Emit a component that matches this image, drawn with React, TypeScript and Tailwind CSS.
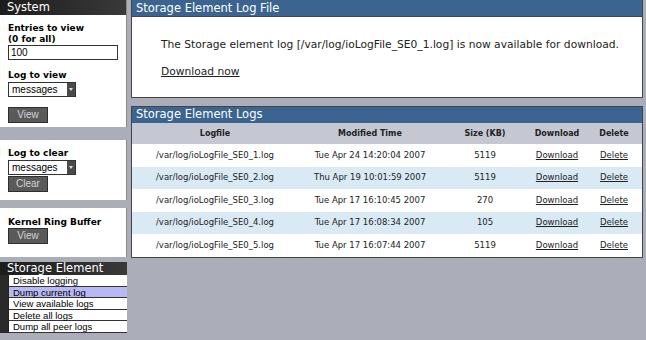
import React from 'react';

const rows = [
  { file: '/var/log/ioLogFile_SE0_1.log', time: 'Tue Apr 24 14:20:04 2007', size: '5119' },
  { file: '/var/log/ioLogFile_SE0_2.log', time: 'Thu Apr 19 10:01:59 2007', size: '5119' },
  { file: '/var/log/ioLogFile_SE0_3.log', time: 'Tue Apr 17 16:10:45 2007', size: '270' },
  { file: '/var/log/ioLogFile_SE0_4.log', time: 'Tue Apr 17 16:08:34 2007', size: '105' },
  { file: '/var/log/ioLogFile_SE0_5.log', time: 'Tue Apr 17 16:07:44 2007', size: '5119' },
];

const navItems = ['Disable logging', 'Dump current log', 'View available logs', 'Delete all logs', 'Dump all peer logs'];

const Button = ({ label }: { label: string }) => (
  <div className="w-[40px] h-[16px] bg-[#5a5a5a] border border-[#2e2e2e] flex items-center justify-center text-[10px] text-[#d4d4d4] leading-none font-['Liberation_Sans',sans-serif]">
    {label}
  </div>
);

const FakeSelect = () => (
  <div className="w-[68px] h-[15px] bg-white border border-[#333] flex items-center">
    <span className="flex-1 pl-[3px] text-[10px] leading-none text-black font-['Liberation_Sans',sans-serif]">messages</span>
    <div className="w-[8px] h-full bg-[#4a4a4a] flex items-center justify-center">
      <div className="w-0 h-0 border-l-[2px] border-r-[2px] border-t-[3px] border-l-transparent border-r-transparent border-t-[#ddd]" />
    </div>
  </div>
);

const Label = ({ children }: { children: React.ReactNode }) => (
  <div className="text-[9px] font-bold leading-[11px] text-black font-['DejaVu_Sans',sans-serif]">{children}</div>
);

export default function App() {
  return (
    <div className="w-[646px] h-[340px] bg-[#abadb8] flex items-start overflow-hidden font-['DejaVu_Sans',sans-serif]">
      <aside className="w-[127px] flex flex-col">
        <div className="h-[127px] bg-white border-r border-[#8a8a8a]">
          <div className="h-[15px] bg-gradient-to-r from-[#1c1c1c] to-[#3a3a3a] text-white text-[11.5px] leading-[15px] pl-[7px]">System</div>
          <div className="pl-[8px] pt-[8px]">
            <Label>Entries to view</Label>
            <Label>(0 for all)</Label>
            <div className="w-[110px] h-[15px] bg-white border border-[#333] text-[10px] leading-[13px] pl-[2px] text-black font-['Liberation_Sans',sans-serif]">100</div>
            <div className="mt-[10px]">
              <Label>Log to view</Label>
            </div>
            <div className="mt-[1px]">
              <FakeSelect />
            </div>
            <div className="mt-[10px]">
              <Button label="View" />
            </div>
          </div>
        </div>

        <div className="mt-[13px] h-[60px] bg-white border-r border-[#8a8a8a] pl-[8px] pt-[8px]">
          <Label>Log to clear</Label>
          <div className="mt-[1px]">
            <FakeSelect />
          </div>
          <div className="mt-[1px]">
            <Button label="Clear" />
          </div>
        </div>

        <div className="mt-[8px] h-[49px] bg-white border-r border-[#8a8a8a] pl-[8px] pt-[9px]">
          <Label>Kernel Ring Buffer</Label>
          <Button label="View" />
        </div>

        <div className="mt-[5px]">
          <div className="h-[13px] bg-gradient-to-r from-[#1c1c1c] to-[#3a3a3a] text-white text-[11.5px] leading-[13px] pl-[7px]">Storage Element</div>
          <div className="flex">
            <div className="w-[8px] bg-[#2a2a2a]" />
            <div className="flex-1 border-l border-[#222]">
              {navItems.map((item, i) => (
                <div
                  key={item}
                  className={`h-[11.5px] border-b border-[#333] pl-[4px] text-[9.5px] leading-[11px] text-black font-['Liberation_Sans',sans-serif] ${i === 1 ? 'bg-[#b8b8f4]' : 'bg-white'}`}
                >
                  {item}
                </div>
              ))}
            </div>
          </div>
        </div>
      </aside>

      <main className="ml-[4px] w-[512px] flex flex-col">
        <section className="h-[98px] bg-white border border-[#444] border-t-0">
          <div className="h-[17px] bg-[#3b6590] border-b border-[#444] text-white text-[11.5px] leading-[16px] pl-[4px]">Storage Element Log File</div>
          <div className="pl-[29px] pt-[21px] text-[10.7px] text-[#222]">
            <p className="leading-[13px]">The Storage element log [/var/log/ioLogFile_SE0_1.log] is now available for download.</p>
            <p className="mt-[14px] leading-[13px] underline">Download now</p>
          </div>
        </section>

        <section className="mt-[8px] bg-white border border-[#444]">
          <div className="h-[16px] bg-[#3b6590] text-white text-[11.5px] leading-[15px] pl-[4px]">Storage Element Logs</div>
          <div className="grid grid-cols-[166px_144px_86px_58px_1fr] h-[21px] bg-[#c5c8d3] items-center text-center text-[8px] font-bold text-[#222]">
            <div>Logfile</div>
            <div>Modified Time</div>
            <div>Size (KB)</div>
            <div>Download</div>
            <div>Delete</div>
          </div>
          {rows.map((r, i) => (
            <div
              key={r.file}
              className={`grid grid-cols-[166px_144px_86px_58px_1fr] h-[22.5px] items-center text-center text-[8.5px] text-[#222] ${i % 2 === 1 ? 'bg-[#d9eaf5]' : 'bg-white'}`}
            >
              <div>{r.file}</div>
              <div>{r.time}</div>
              <div>{r.size}</div>
              <div className="underline">Download</div>
              <div className="underline">Delete</div>
            </div>
          ))}
        </section>
      </main>
    </div>
  );
}
